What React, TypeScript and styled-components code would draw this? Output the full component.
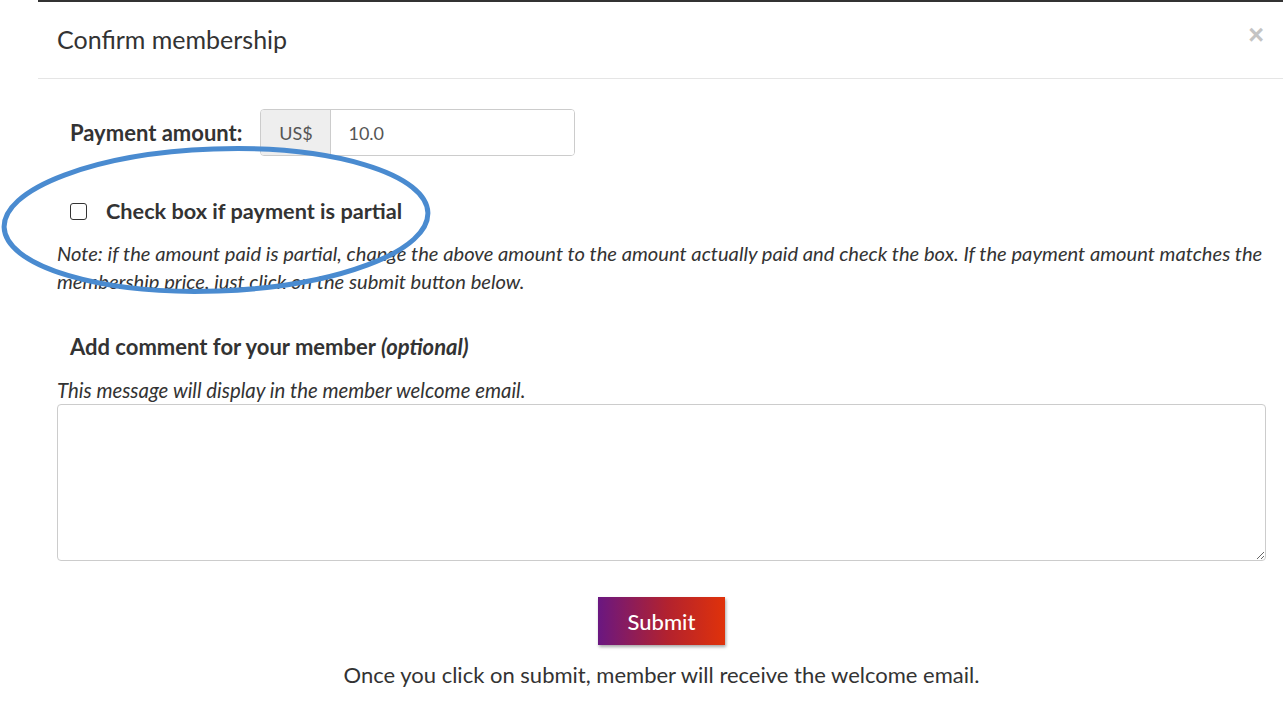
import React from "react";
import styled, { createGlobalStyle } from "styled-components";

const GlobalStyle = createGlobalStyle`
  html, body {
    margin: 0;
    padding: 0;
    background: #fff;
  }
  body {
    font-family: Lato, "Open Sans", Arial, sans-serif;
    color: #333;
  }
`;

const Page = styled.div`
  position: relative;
  width: 1283px;
  height: 706px;
  overflow: hidden;
  background: #fff;
`;

const Modal = styled.div`
  margin-left: 38px;
  border-top: 2px solid #333;
  display: flex;
  flex-direction: column;
`;

const Header = styled.div`
  height: 76px;
  display: flex;
  align-items: center;
  justify-content: space-between;
  padding: 0 19px;
  border-bottom: 1px solid #e5e5e5;
`;

const Title = styled.h4`
  margin: 0;
  margin-top: -3px;
  font-size: 25px;
  font-weight: 400;
  color: #333;
`;

const Close = styled.button`
  border: 0;
  background: none;
  padding: 0;
  margin-top: -10px;
  font-family: Arial, sans-serif;
  font-size: 27px;
  font-weight: 700;
  line-height: 1;
  color: #c4c4c4;
  cursor: pointer;
`;

const Body = styled.div`
  display: flex;
  flex-direction: column;
  padding: 0 17px 0 19px;
`;

const AmountRow = styled.div`
  display: flex;
  align-items: center;
  gap: 18px;
  margin-top: 30px;
  padding-left: 13px;
`;

const Label = styled.label`
  font-size: 22px;
  font-weight: 700;
  color: #333;
`;

const InputGroup = styled.div`
  display: flex;
  width: 315px;
  height: 47px;
  border: 1px solid #ccc;
  border-radius: 4px;
  box-sizing: border-box;
  overflow: hidden;
`;

const Addon = styled.span`
  flex: 0 0 70px;
  display: flex;
  align-items: center;
  justify-content: center;
  background: #eee;
  border-right: 1px solid #ccc;
  box-sizing: border-box;
  font-size: 18px;
  color: #555;
`;

const AmountInput = styled.input`
  flex: 1;
  min-width: 0;
  border: 0;
  outline: none;
  padding: 0 17px;
  font-family: inherit;
  font-size: 18px;
  color: #555;
`;

const CheckRow = styled.label`
  display: flex;
  align-items: center;
  gap: 19px;
  margin-top: 42px;
  padding-left: 13px;
  font-size: 21.7px;
  font-weight: 700;
  color: #333;
`;

const Box = styled.span`
  width: 15px;
  height: 15px;
  border: 1.5px solid #333;
  border-radius: 3px;
`;

const Note = styled.p`
  margin: 15px 0 0;
  font-size: 20.15px;
  font-style: italic;
  line-height: 28px;
  color: #333;
`;

const Heading = styled.div`
  margin-top: 38px;
  padding-left: 13px;
  font-size: 22px;
  font-weight: 700;
  color: #333;

  em {
    font-weight: 700;
  }
`;

const Help = styled.div`
  margin-top: 18px;
  font-size: 20.4px;
  font-style: italic;
  color: #333;
`;

const TextArea = styled.textarea`
  margin-top: 2px;
  height: 157px;
  box-sizing: border-box;
  border: 1px solid #ccc;
  border-radius: 4px;
  resize: vertical;
  font-family: inherit;
`;

const Footer = styled.div`
  display: flex;
  flex-direction: column;
  align-items: center;
  margin-top: 36px;
`;

const SubmitButton = styled.button`
  width: 127px;
  height: 48px;
  border: 0;
  background: linear-gradient(90deg, #6a1781 0%, #b3222e 55%, #e0320a 100%);
  box-shadow: 1px 2px 3px rgba(0, 0, 0, 0.35);
  color: #fff;
  font-family: inherit;
  font-size: 22px;
  font-weight: 500;
  cursor: pointer;
`;

const Hint = styled.p`
  margin: 16px 0 0;
  font-size: 22px;
  color: #333;
`;

const Annotation = styled.svg`
  position: absolute;
  left: 0;
  top: 144px;
  pointer-events: none;
`;

export default function App() {
  return (
    <Page>
      <GlobalStyle />
      <Modal>
        <Header>
          <Title>Confirm membership</Title>
          <Close aria-label="Close">×</Close>
        </Header>
        <Body>
          <AmountRow>
            <Label>Payment amount:</Label>
            <InputGroup>
              <Addon>US$</Addon>
              <AmountInput defaultValue="10.0" />
            </InputGroup>
          </AmountRow>
          <CheckRow>
            <Box />
            Check box if payment is partial
          </CheckRow>
          <Note>
            Note: if the amount paid is partial, change the above amount to the amount actually paid and check
            the box. If the payment amount matches the membership price, just click on the submit button below.
          </Note>
          <Heading>
            Add comment for your member <em>(optional)</em>
          </Heading>
          <Help>This message will display in the member welcome email.</Help>
          <TextArea />
          <Footer>
            <SubmitButton>Submit</SubmitButton>
            <Hint>Once you click on submit, member will receive the welcome email.</Hint>
          </Footer>
        </Body>
      </Modal>
      <Annotation width="440" height="156" viewBox="0 0 440 156">
        <ellipse
          cx="216"
          cy="76"
          rx="212"
          ry="71"
          transform="rotate(-2 216 76)"
          fill="none"
          stroke="#4a8bd0"
          strokeWidth="5"
        />
      </Annotation>
    </Page>
  );
}
